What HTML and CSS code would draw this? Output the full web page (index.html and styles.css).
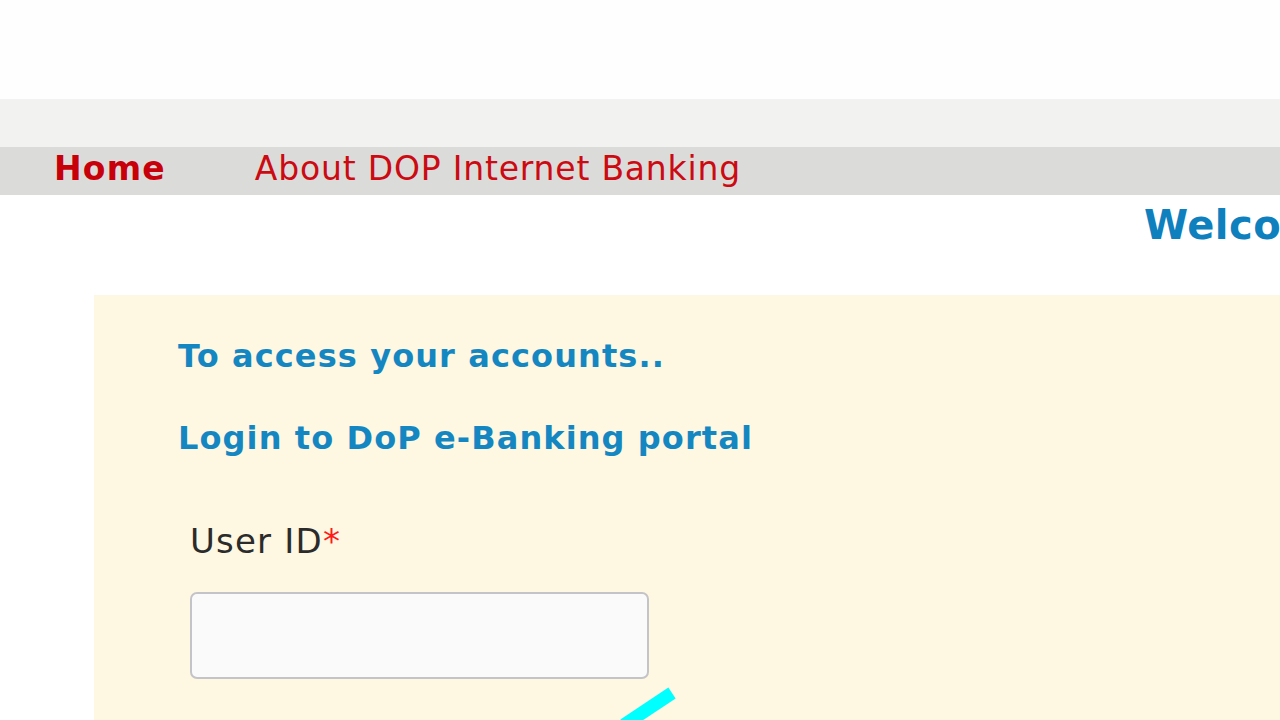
FILE: index.html
```html
<!DOCTYPE html>
<html lang="en">
<head>
  <meta charset="UTF-8" />
  <meta name="viewport" content="width=device-width, initial-scale=1.0"/>
  <title>DOP Internet Banking</title>
  <link rel="stylesheet" href="styles.css">
</head>
<body>

  <div class="top-space"></div>
  <div class="sub-bar"></div>

  <nav class="nav-bar">
    <a href="#" class="nav-link active">Home</a>
    <a href="#" class="nav-link">About DOP Internet Banking</a>
  </nav>

  <div class="welcome-row">
    <h1 class="welcome">Welcome to DOP Internet Banking</h1>
  </div>

  <div class="login-panel">
    <h2 class="panel-title">To access your accounts..</h2>
    <h2 class="panel-title">Login to DoP e-Banking portal</h2>

    <div class="field">
      <label for="userId">User ID<span class="req">*</span></label>
      <input type="text" id="userId" class="text-input" />
    </div>

    <svg class="marker" width="80" height="40" viewBox="0 0 80 40">
      <line x1="8" y1="42" x2="56" y2="10" stroke="#00ffff" stroke-width="13" />
    </svg>
  </div>

</body>
</html>
```

FILE: styles.css
```css
* {
  margin: 0;
  padding: 0;
  box-sizing: border-box;
}

body {
  font-family: "DejaVu Sans", Verdana, sans-serif;
  background: #fff;
  width: 1280px;
  height: 720px;
  overflow: hidden;
}

.top-space {
  height: 99px;
  background: #fefefe;
}

.sub-bar {
  height: 48px;
  background: #f2f2f0;
}

.nav-bar {
  height: 48px;
  background: #dbdbda;
  display: flex;
  align-items: center;
  padding: 0 0 5px 54px;
  gap: 89px;
}

.nav-link {
  color: #cc0a12;
  text-decoration: none;
  font-size: 33px;
  letter-spacing: 0.8px;
}

.nav-link.active {
  font-weight: bold;
  letter-spacing: 1.2px;
  color: #c8000a;
}

.welcome-row {
  height: 100px;
  padding-left: 1144px;
  white-space: nowrap;
}

.welcome {
  font-size: 40px;
  font-weight: bold;
  color: #0e80be;
  line-height: 60px;
  letter-spacing: 0.5px;
}

.login-panel {
  position: relative;
  margin-left: 94px;
  height: 440px;
  background: #fef7e1;
  padding: 40px 0 0 84px;
}

.panel-title {
  font-size: 32px;
  font-weight: bold;
  color: #1487c2;
  line-height: 42px;
  letter-spacing: 1.1px;
  margin-bottom: 40px;
}

.field {
  padding: 22px 0 0 12px;
}

.field label {
  display: block;
  font-size: 34px;
  letter-spacing: 1.2px;
  color: #2b2b2b;
  margin-bottom: 31px;
}

.req {
  color: #ff1a1a;
}

.text-input {
  display: block;
  width: 459px;
  height: 87px;
  border: 2px solid #c4c4c8;
  border-radius: 7px;
  background: #fafafa;
}

.marker {
  position: absolute;
  left: 522px;
  top: 388px;
}
```
